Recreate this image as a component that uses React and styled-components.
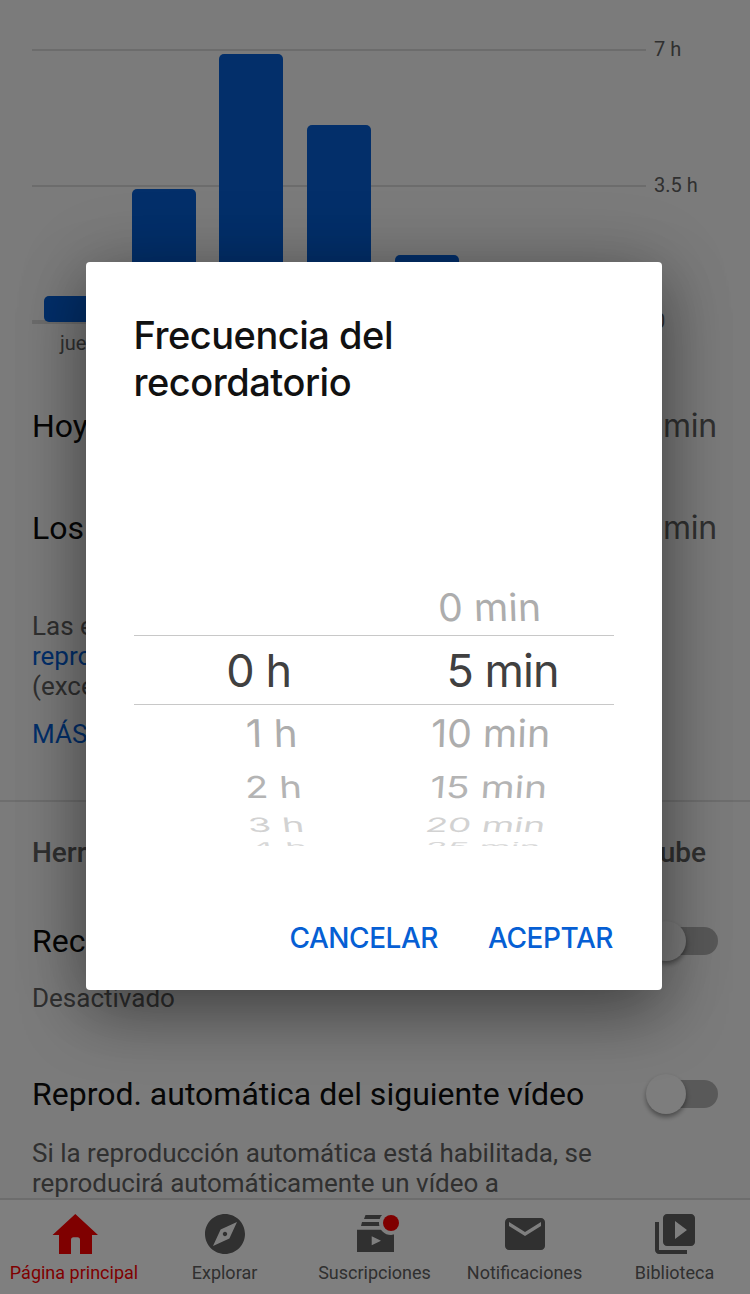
import styled, { createGlobalStyle } from "styled-components";

const GlobalStyle = createGlobalStyle`
  * {
    box-sizing: border-box;
  }
  body {
    margin: 0;
    font-family: Roboto, "Liberation Sans", sans-serif;
  }
  p, h1, h2 {
    margin: 0;
  }
  button {
    padding: 0;
    border: none;
    background: none;
    cursor: pointer;
  }
`;

const Screen = styled.div`
  display: grid;
  width: 750px;
  height: 1294px;
  overflow: hidden;
`;

const Page = styled.div`
  grid-area: 1 / 1;
  display: flex;
  flex-direction: column;
  height: 1294px;
  background-color: #f7f7f7;
`;

const Content = styled.main`
  height: 1198px;
  overflow: hidden;
`;

const Chart = styled.section`
  display: grid;
  grid-template-columns: 614px 1fr;
  grid-template-rows: 275px;
  column-gap: 8px;
  height: 275px;
  margin: 49px 0 0 32px;
`;

const Plot = styled.div`
  display: grid;
`;

const GridLines = styled.div`
  grid-area: 1 / 1;
`;

const GridLine = styled.div`
  height: ${(props) => (props.$base ? "4px" : "2px")};
  margin-bottom: ${(props) => props.$space || 0}px;
  background-color: #d9d9d9;
`;

const Bars = styled.div`
  grid-area: 1 / 1;
  display: grid;
  grid-template-columns: repeat(7, 1fr);
  justify-items: center;
  align-items: end;
  padding-bottom: 2px;
`;

const Bar = styled.div`
  width: 64px;
  border-radius: 5px;
  background-color: #065fd4;
`;

const Axis = styled.div`
  display: flex;
  flex-direction: column;
  gap: 112px;
  margin-top: -12px;
  font-size: 20px;
  line-height: 24px;
  color: #606060;
`;

const Days = styled.div`
  display: grid;
  grid-template-columns: repeat(7, 1fr);
  width: 614px;
  margin: 7px 0 50px 32px;
  font-size: 20px;
  line-height: 25px;
  text-align: center;
  color: #606060;
`;

const Row = styled.div`
  display: flex;
  justify-content: space-between;
  align-items: ${(props) => props.$align || "center"};
  height: 40px;
  margin: ${(props) => props.$top || 0}px 32px 0;
  font-size: 32px;
  line-height: 40px;
  color: #0d0d0d;
`;

const Value = styled.span`
  padding-right: 1px;
  font-family: Inter, sans-serif;
  letter-spacing: -0.2px;
  color: #606060;
`;

const Note = styled.p`
  margin: ${(props) => props.$top}px 32px 0;
  font-size: 26px;
  line-height: 30px;
  color: #606060;
`;

const NoteLink = styled.a`
  color: #065fd4;
`;

const Divider = styled.div`
  height: 2px;
  margin-top: 51px;
  background-color: #dcdcdc;
`;

const SectionTitle = styled.h2`
  margin: 33px 44px 50px 32px;
  font-size: 28px;
  font-weight: 500;
  line-height: 36px;
  white-space: nowrap;
  text-align-last: justify;
  color: #606060;
`;

const Switch = styled.div`
  display: grid;
  align-items: center;
  width: 72px;
  height: 40px;
`;

const Track = styled.div`
  grid-area: 1 / 1;
  height: 28px;
  margin-left: 4px;
  border-radius: 14px;
  background-color: #b2b2b2;
`;

const Thumb = styled.div`
  grid-area: 1 / 1;
  width: 40px;
  height: 40px;
  border-radius: 50%;
  background-color: #fafafa;
  box-shadow: 0 3px 5px rgba(0, 0, 0, 0.4);
`;

const NavBar = styled.nav`
  display: grid;
  grid-template-columns: repeat(5, 1fr);
  height: 96px;
  padding-top: 10px;
  border-top: 2px solid #dadada;
  background-color: white;
`;

const NavItem = styled.div`
  display: flex;
  flex-direction: column;
  align-items: center;
  gap: 4px;
  font-size: 18px;
  line-height: 22px;
  white-space: nowrap;
  color: ${(props) => (props.$active ? "#ff0000" : "#606060")};
  svg {
    width: 48px;
    height: 48px;
    fill: currentColor;
  }
`;

const NavLabel = styled.span`
  margin-right: ${(props) => (props.$active ? "2px" : "1px")};
`;

const Scrim = styled.div`
  grid-area: 1 / 1;
  z-index: 1;
  padding: 262px 88px 0 86px;
  background-color: rgba(0, 0, 0, 0.5);
`;

const Dialog = styled.div`
  height: 728px;
  padding: 50px 48px 0;
  border-radius: 4px;
  background-color: white;
  box-shadow: 0 0 76px rgba(0, 0, 0, 0.16), 0 24px 64px rgba(0, 0, 0, 0.38);
  font-family: Inter, sans-serif;
`;

const DialogTitle = styled.h1`
  width: 300px;
  margin-left: -0.5px;
  font-size: 38px;
  font-weight: 500;
  line-height: 47px;
  letter-spacing: -0.48px;
  color: #111111;
`;

const Picker = styled.div`
  display: grid;
  grid-template-columns: 1fr 1fr;
  height: 352px;
  margin-top: 88px;
  overflow: hidden;
`;

const Wheel = styled.div`
  display: flex;
  flex-direction: column;
  padding-top: ${(props) => props.$top}px;
`;

const WheelRow = styled.div`
  display: flex;
  flex: none;
  align-items: center;
  justify-content: flex-end;
  height: ${(props) => props.$height}px;
  padding-right: ${(props) => props.$right}px;
  font-size: 45px;
  line-height: 1;
  white-space: nowrap;
  color: ${(props) => props.$color};
`;

const SelectedRow = styled(WheelRow)`
  padding-top: 1px;
  border-top: 1px solid #c8c8c8;
  border-bottom: 1px solid #c8c8c8;
  letter-spacing: -1px;
`;

const WheelText = styled.span`
  transform: skewX(${(props) => props.$skew}deg)
    scale(${(props) => props.$x}, ${(props) => props.$y});
  transform-origin: right center;
`;

const Actions = styled.div`
  display: flex;
  justify-content: flex-end;
  gap: 50px;
  margin-top: 75px;
  padding-right: 1px;
`;

const ActionButton = styled.button`
  font-family: Inter, sans-serif;
  font-size: 28px;
  font-weight: 450;
  line-height: 34px;
  letter-spacing: -0.45px;
  color: #065fd4;
`;

const bars = [
  { day: "jue.", height: 26 },
  { day: "", height: 133 },
  { day: "", height: 268 },
  { day: "", height: 197 },
  { day: "", height: 67 },
  { day: "", height: 0 },
  { day: "", height: 0 },
];

// The further a row is from the selected one, the flatter and lighter it gets
const hours = [
  { text: "0 h", height: 70, right: 83, selected: true },
  { text: "1 h", height: 56, right: 76, x: 0.898, y: 0.846, skew: 1.5 },
  { text: "2 h", height: 51, right: 72, x: 0.851, y: 0.67, skew: 3 },
  { text: "3 h", height: 25, right: 69.5, x: 0.837, y: 0.44, skew: 7 },
  { text: "4 h", height: 18, right: 66.5, x: 0.83, y: 0.27, skew: 12 },
];

const minutes = [
  { text: "0 min", height: 56, right: 73, x: 0.873, y: 0.846, skew: 2 },
  { text: "5 min", height: 70, right: 55.5, selected: true },
  { text: "10 min", height: 56, right: 63.5, x: 0.875, y: 0.846, skew: -1.5 },
  { text: "15 min", height: 51, right: 66.5, x: 0.865, y: 0.67, skew: -4 },
  { text: "20 min", height: 25, right: 69, x: 0.825, y: 0.44, skew: -10 },
  { text: "25 min", height: 18, right: 74, x: 0.795, y: 0.27, skew: -16 },
];

const fades = ["#404040", "#adadad", "#b4b4b4", "#d2d2d2", "#d8d8d8"];

function WheelColumn({ rows, top }) {
  const selected = rows.findIndex((row) => row.selected);
  return (
    <Wheel $top={top}>
      {rows.map((row, i) => {
        const color = fades[Math.abs(i - selected)];
        if (row.selected) {
          return (
            <SelectedRow
              key={row.text}
              $height={row.height}
              $right={row.right}
              $color={color}
            >
              {row.text}
            </SelectedRow>
          );
        }
        return (
          <WheelRow
            key={row.text}
            $height={row.height}
            $right={row.right}
            $color={color}
          >
            <WheelText $x={row.x} $y={row.y} $skew={row.skew}>
              {row.text}
            </WheelText>
          </WheelRow>
        );
      })}
    </Wheel>
  );
}

function UsageChart() {
  return (
    <>
      <Chart>
        <Plot>
          <GridLines>
            <GridLine $space={134} />
            <GridLine $space={133} />
            <GridLine $base />
          </GridLines>
          <Bars>
            {bars.map((bar, i) => (
              <Bar key={i} style={{ height: bar.height }} />
            ))}
          </Bars>
        </Plot>
        <Axis>
          <span>7 h</span>
          <span>3.5 h</span>
          <span>0</span>
        </Axis>
      </Chart>
      <Days>
        {bars.map((bar, i) => (
          <span key={i}>{bar.day}</span>
        ))}
      </Days>
    </>
  );
}

function Toggle() {
  return (
    <Switch>
      <Track />
      <Thumb />
    </Switch>
  );
}

function HomeIcon() {
  return (
    <svg viewBox="0 0 48 48">
      <path d="M24.3 4L47 25H41V44H29V30Q29 27.3 26.5 27.3H22.5Q20 27.3 20 30V44H8V25H1.5Z" />
    </svg>
  );
}

function ExploreIcon() {
  return (
    <svg viewBox="0 0 24 24">
      <path d="M12 10.9c-.61 0-1.1.49-1.1 1.1s.49 1.1 1.1 1.1 1.1-.49 1.1-1.1-.49-1.1-1.1-1.1zM12 2C6.48 2 2 6.48 2 12s4.48 10 10 10 10-4.48 10-10S17.52 2 12 2zm2.19 12.19L6 18l3.81-8.19L18 6l-3.81 8.19z" />
    </svg>
  );
}

function SubscriptionsIcon() {
  return (
    <svg viewBox="0 0 48 48">
      <path d="M14.5 5H32V9H13ZM11 12H30V16H10ZM6 19.7H43V42H6ZM20.7 26.3V35.3L30 30.8Z" />
      <circle cx="40" cy="13" r="12" fill="white" />
      <circle cx="40" cy="13" r="8" fill="#ff0000" />
    </svg>
  );
}

function MailIcon() {
  return (
    <svg viewBox="0 0 24 24">
      <path d="M20 4H4c-1.1 0-1.99.9-1.99 2L2 18c0 1.1.9 2 2 2h16c1.1 0 2-.9 2-2V6c0-1.1-.9-2-2-2zm0 4l-8 5-8-5V6l8 5 8-5v2z" />
    </svg>
  );
}

function LibraryIcon() {
  return (
    <svg viewBox="0 0 24 24">
      <path d="M4 6H2v14c0 1.1.9 2 2 2h14v-2H4V6zm16-4H8c-1.1 0-2 .9-2 2v12c0 1.1.9 2 2 2h12c1.1 0 2-.9 2-2V4c0-1.1-.9-2-2-2zm-8 12.5v-9l6 4.5-6 4.5z" />
    </svg>
  );
}

function Nav() {
  return (
    <NavBar>
      <NavItem $active>
        <HomeIcon />
        <NavLabel $active>Página principal</NavLabel>
      </NavItem>
      <NavItem>
        <ExploreIcon />
        <NavLabel>Explorar</NavLabel>
      </NavItem>
      <NavItem>
        <SubscriptionsIcon />
        <NavLabel>Suscripciones</NavLabel>
      </NavItem>
      <NavItem>
        <MailIcon />
        <NavLabel>Notificaciones</NavLabel>
      </NavItem>
      <NavItem>
        <LibraryIcon />
        <NavLabel>Biblioteca</NavLabel>
      </NavItem>
    </NavBar>
  );
}

function ReminderDialog() {
  return (
    <Scrim>
      <Dialog role="dialog">
        <DialogTitle>Frecuencia del recordatorio</DialogTitle>
        <Picker>
          <WheelColumn rows={hours} top={141} />
          <WheelColumn rows={minutes} top={85} />
        </Picker>
        <Actions>
          <ActionButton>CANCELAR</ActionButton>
          <ActionButton>ACEPTAR</ActionButton>
        </Actions>
      </Dialog>
    </Scrim>
  );
}

export default function App() {
  return (
    <>
      <GlobalStyle />
      <Screen>
        <Page>
          <Content>
            <UsageChart />
            <Row $align="baseline">
              <span>Hoy</span>
              <Value>0 min</Value>
            </Row>
            <Row $align="baseline" $top={62}>
              <span>Los últimos 7 días</span>
              <Value>18 h 5 min</Value>
            </Row>
            <Note $top={63}>
              Las estadísticas se basan en tu
              <br />
              <NoteLink>reproducciones</NoteLink> de YouTube
              <br />
              (excepto YouTube Music)
            </Note>
            <Note $top={18}>
              <NoteLink>MÁS INFORMACIÓN</NoteLink>
            </Note>
            <Divider />
            <SectionTitle>
              Herramientas para gestionar tu tiempo en YouTube
            </SectionTitle>
            <Row>
              <span>Recordarme descansar</span>
              <Toggle />
            </Row>
            <Note $top={22}>Desactivado</Note>
            <Row $top={61}>
              <span>Reprod. automática del siguiente vídeo</span>
              <Toggle />
            </Row>
            <Note $top={24}>
              Si la reproducción automática está habilitada, se
              <br />
              reproducirá automáticamente un vídeo a
            </Note>
          </Content>
          <Nav />
        </Page>
        <ReminderDialog />
      </Screen>
    </>
  );
}
